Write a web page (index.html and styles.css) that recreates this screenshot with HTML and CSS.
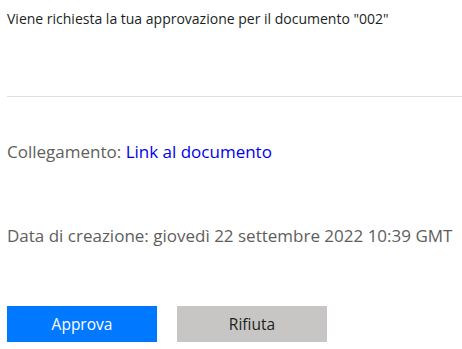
FILE: index.html
```html
<!DOCTYPE html>
<html lang="it">
<head>
    <meta charset="UTF-8">
    <title>Richiesta di approvazione</title>
    <link rel="stylesheet" href="styles.css">
</head>
<body>
    <div class="card">
        <p class="request">Viene richiesta la tua approvazione per il documento "002"</p>
        <hr class="divider">
        <p class="info">Collegamento: <a href="#">Link al documento</a></p>
        <p class="info date">Data di creazione: giovedì 22 settembre 2022 10:39 GMT</p>
        <div class="actions">
            <button class="btn approve">Approva</button>
            <button class="btn reject">Rifiuta</button>
        </div>
    </div>
</body>
</html>
```

FILE: styles.css
```css
body {
    margin: 0;
    font-family: "Open Sans", sans-serif;
    background: #fff;
}

.card {
    padding: 0 0 0 7px;
}

.request {
    margin: 0;
    padding-top: 10px;
    font-size: 14px;
    line-height: 18px;
    color: #201f1e;
}

.divider {
    margin: 68px 0 0 0;
    border: none;
    border-top: 1px solid #e1dfdd;
}

.info {
    margin: 44px 0 0 0;
    font-size: 17px;
    line-height: 22px;
    color: #605e5c;
}

.info a {
    color: #0000ee;
    text-decoration: none;
}

.date {
    margin-top: 62px;
}

.actions {
    display: flex;
    gap: 20px;
    margin-top: 59px;
}

.btn {
    width: 150px;
    height: 36px;
    border: none;
    font-family: inherit;
    font-size: 15.5px;
}

.approve {
    background: #0078ff;
    color: #fff;
}

.reject {
    background: #c8c6c4;
    color: #201f1e;
}
```
